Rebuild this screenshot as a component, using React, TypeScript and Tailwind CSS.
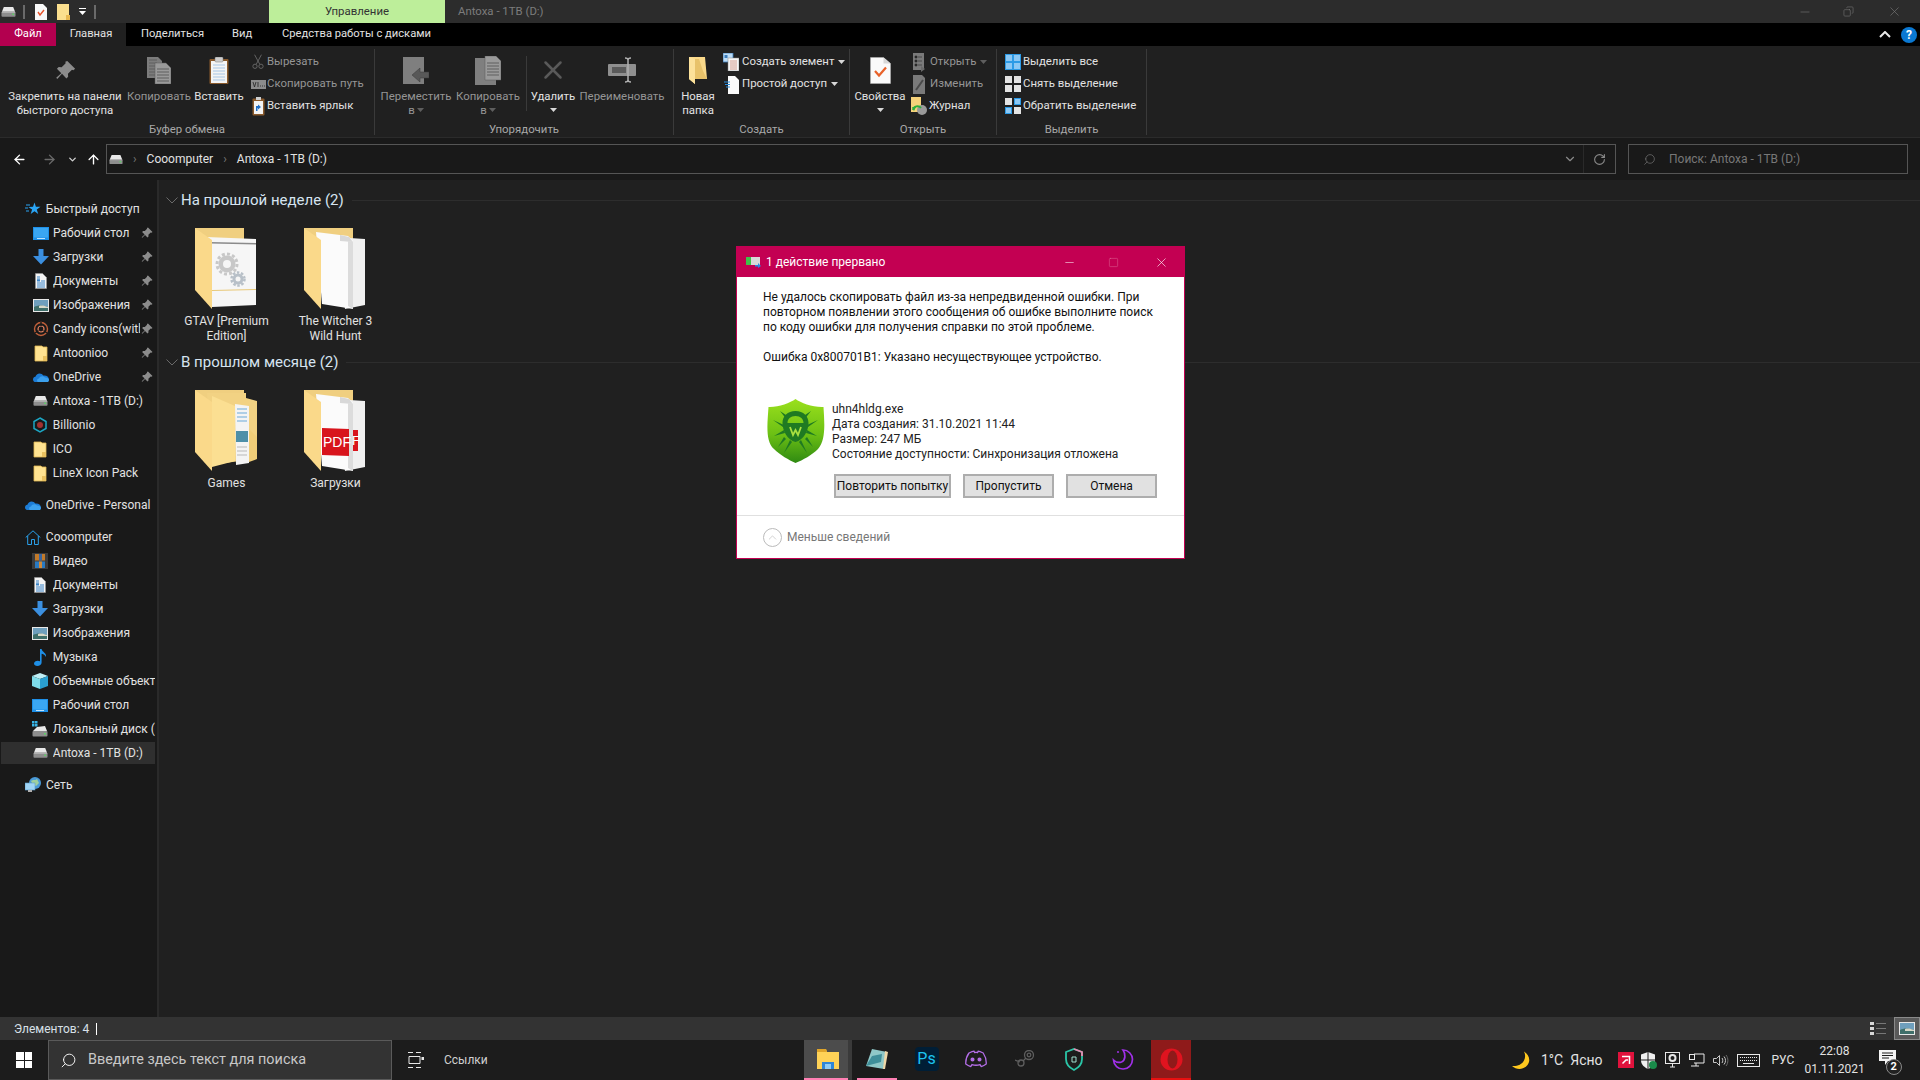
import React from 'react';
import { ChevronDown, ArrowLeft, ArrowRight, ArrowUp, RotateCw, Search, X, Minus, Square, Copy, ChevronUp } from 'lucide-react';

const Drive = ({ s = 18 }: { s?: number }) => (
  <svg width={s} height={s * 0.75} viewBox="0 0 16 12" className="shrink-0">
    <path d="M3 1h10l2 5H1z" fill="#e8e8e8" />
    <rect x="0.5" y="6" width="15" height="5.5" rx="1" fill="#8e8e8e" />
    <rect x="1" y="6" width="14" height="1" fill="#c8c8c8" />
    <rect x="12" y="8" width="2" height="1.6" fill="#5fd068" />
  </svg>
);

const FolderSm = () => (
  <svg width="14" height="17" viewBox="0 0 14 17" className="shrink-0">
    <path d="M1 1h7l1 1h4v14H1z" fill="#ffe391" stroke="#e0b650" strokeWidth="0.8" />
    <rect x="9" y="11" width="4" height="5" fill="#eac15f" />
  </svg>
);

const Pin = ({ c = '#8c8c8c', s = 12 }: { c?: string; s?: number }) => (
  <svg width={s} height={s} viewBox="0 0 12 12" className="shrink-0">
    <path d="M7 0.5l4.5 4.5-1 .8-.8-.3-2.3 2.3.1 1.7-1 1L4 7.9l-2.7 2.9-.6-.6L3.6 7.5 1.1 5l1-1 1.7.1 2.3-2.3-.2-.8z" fill={c} />
  </svg>
);

const Star = () => (
  <svg width="16" height="16" viewBox="0 0 16 16" className="shrink-0">
    <path d="M9.5 1.5l1.4 4.2 4.6.1-3.7 2.7 1.4 4.5-3.7-2.7-3.8 2.7 1.4-4.5L3.4 6l4.6-.2z" fill="#2aa4f4" />
    <path d="M1 4h4M0 7h3M1 10h3" stroke="#2aa4f4" strokeWidth="1" />
  </svg>
);

const Desktop = () => (
  <svg width="16" height="13" viewBox="0 0 16 13" className="shrink-0">
    <rect width="16" height="13" fill="#1e90e8" />
    <rect x="1" y="1" width="14" height="9.5" fill="#3aa6f2" />
    <rect x="4" y="11" width="8" height="1" fill="#bfe2fa" />
  </svg>
);

const Download = () => (
  <svg width="16" height="16" viewBox="0 0 16 16" className="shrink-0">
    <path d="M5.5 0h5v7H16l-8 8.5L0 7h5.5z" fill="#3b8fe0" />
  </svg>
);

const Docs = () => (
  <svg width="12" height="16" viewBox="0 0 12 16" className="shrink-0">
    <path d="M0.5 0.5h7l4 4v11h-11z" fill="#f4f4f4" stroke="#9a9a9a" strokeWidth="0.6" />
    <path d="M2 4h3M2 6h3M6 8h4M2 10h8M2 12h8M2 14h8" stroke="#3a84c8" strokeWidth="1" />
    <rect x="2" y="6.5" width="3" height="2" fill="#3a84c8" />
  </svg>
);

const Images = () => (
  <svg width="16" height="13" viewBox="0 0 16 13" className="shrink-0">
    <rect width="16" height="13" fill="#e8e8e8" />
    <rect x="1" y="1" width="14" height="11" fill="#6f9fbd" />
    <path d="M1 8c4-2 8-2 14 0v4H1z" fill="#3f6f6a" />
    <path d="M6 7c3-1 6 0 9 1v1H6z" fill="#d8d8c8" />
  </svg>
);

const Candy = () => (
  <svg width="16" height="16" viewBox="0 0 16 16" className="shrink-0" fill="none">
    <circle cx="8" cy="8" r="6.5" stroke="#c2603a" strokeWidth="1.4" />
    <circle cx="8" cy="8" r="3" stroke="#e08060" strokeWidth="1.2" />
    <path d="M8 1v4M2 12l3.5-2.5M14 12l-3.5-2.5" stroke="#1a1a1a" strokeWidth="1.4" />
  </svg>
);

const Cloud = ({ w = 16 }: { w?: number }) => (
  <svg width={w} height={w * 0.65} viewBox="0 0 16 10.4" className="shrink-0">
    <path d="M3.5 10.4C1.5 10.4 0 9 0 7.4 0 6 1 5 2.4 4.8 3 2.8 4.6 1.4 6.6 1.4c1.6 0 3 .9 3.7 2.2 2.8-.5 5.7 1.2 5.7 4 0 1.6-1.2 2.8-3 2.8z" fill="#1c7cd6" />
    <path d="M6 10.4c-1.2 0-2-.9-2-1.9 0-1.1.8-1.9 2-2 .6-1.3 1.9-2.2 3.3-2.2 1 0 2 .4 2.7 1.2 2-.2 4 .8 4 2.6 0 1.3-1 2.3-2.5 2.3z" fill="#3ca0ec" />
  </svg>
);

const Billionio = () => (
  <svg width="16" height="16" viewBox="0 0 16 16" className="shrink-0" fill="none">
    <path d="M8 1l6 3.5v7L8 15l-6-3.5v-7z" stroke="#1ca6c4" strokeWidth="1.5" />
    <circle cx="8" cy="8" r="3" fill="#a03030" />
  </svg>
);

const Home = () => (
  <svg width="16" height="15" viewBox="0 0 16 15" className="shrink-0" fill="none" stroke="#2aa0ea" strokeWidth="1">
    <path d="M0.7 7.5L8 0.8l7.3 6.7M2.7 6v8.500h3.800V9.500h3V14.500h3.800V6" />
  </svg>
);

const Video = () => (
  <svg width="16" height="16" viewBox="0 0 16 16" className="shrink-0">
    <rect width="16" height="16" fill="#3c3c3c" />
    <rect x="3" y="1" width="10" height="6.500" fill="#c27a2a" />
    <rect x="3" y="8.500" width="10" height="6.500" fill="#2a7ac2" />
    <rect x="7" y="1" width="3" height="6.500" fill="#3a66a0" />
    <rect x="7" y="8.500" width="3" height="6.500" fill="#d08a3a" />
  </svg>
);

const Music = () => (
  <svg width="13" height="17" viewBox="0 0 13 17" className="shrink-0">
    <path d="M6 0h1.600c.4 3 5.400 4 4.400 8-.8-2-2.800-3-4.400-3.200V13.500C7.600 15.500 5.600 17 3.400 17 1.400 17 0 16 0 14.600 0 13 1.800 11.800 3.800 11.800c.8 0 1.600.2 2.200.5z" fill="#1f8fe6" />
  </svg>
);

const Cube = () => (
  <svg width="16" height="16" viewBox="0 0 16 16" className="shrink-0">
    <path d="M8 0l8 3-8 3-8-3z" fill="#bfeef5" />
    <path d="M0 3l8 3v10l-8-3z" fill="#7fdcea" />
    <path d="M16 3L8 6v10l8-3z" fill="#2a9fd0" />
  </svg>
);

const LocalDisk = () => (
  <svg width="16" height="16" viewBox="0 0 16 16" className="shrink-0">
    <rect x="0" y="0" width="2.500" height="2.500" fill="#39b6e8" />
    <rect x="3" y="0" width="2.500" height="2.500" fill="#39b6e8" />
    <rect x="0" y="3" width="2.500" height="2.500" fill="#39b6e8" />
    <rect x="3" y="3" width="2.500" height="2.500" fill="#39b6e8" />
    <path d="M5 6l8-1 2 5H1z" fill="#e8e8e8" />
    <rect x="0.500" y="10" width="15" height="5.500" rx="1" fill="#8e8e8e" />
    <rect x="12" y="12" width="2" height="1.600" fill="#5fd068" />
  </svg>
);

const Network = () => (
  <svg width="17" height="16" viewBox="0 0 17 16" className="shrink-0">
    <circle cx="10" cy="6" r="6" fill="#4a9ad8" />
    <path d="M6 4c2-2 4 0 6-2l2 4-3 3-3-1z" fill="#9ed0a0" />
    <rect x="0" y="6" width="10" height="7" fill="#9fd4f5" stroke="#5a9cc8" strokeWidth="0.6" />
    <rect x="3" y="13" width="4" height="2" fill="#b0b0b0" />
  </svg>
);

type NavItem = { label: string; icon: React.ReactNode; pin?: boolean; top?: boolean; selected?: boolean; gap?: boolean };

const navItems: NavItem[] = [
  { label: 'Быстрый доступ', icon: <Star />, top: true },
  { label: 'Рабочий стол', icon: <Desktop />, pin: true },
  { label: 'Загрузки', icon: <Download />, pin: true },
  { label: 'Документы', icon: <Docs />, pin: true },
  { label: 'Изображения', icon: <Images />, pin: true },
  { label: 'Candy icons(with extras)', icon: <Candy />, pin: true },
  { label: 'Antoonioo', icon: <FolderSm />, pin: true },
  { label: 'OneDrive', icon: <Cloud />, pin: true },
  { label: 'Antoxa - 1TB (D:)', icon: <Drive s={15} /> },
  { label: 'Billionio', icon: <Billionio /> },
  { label: 'ICO', icon: <FolderSm /> },
  { label: 'LineX Icon Pack', icon: <FolderSm /> },
  { label: 'OneDrive - Personal', icon: <Cloud />, top: true, gap: true },
  { label: 'Cooomputer', icon: <Home />, top: true, gap: true },
  { label: 'Видео', icon: <Video /> },
  { label: 'Документы', icon: <Docs /> },
  { label: 'Загрузки', icon: <Download /> },
  { label: 'Изображения', icon: <Images /> },
  { label: 'Музыка', icon: <Music /> },
  { label: 'Объемные объекты', icon: <Cube /> },
  { label: 'Рабочий стол', icon: <Desktop /> },
  { label: 'Локальный диск (C:)', icon: <LocalDisk /> },
  { label: 'Antoxa - 1TB (D:)', icon: <Drive s={15} />, selected: true },
  { label: 'Сеть', icon: <Network />, top: true, gap: true },
];

const NavRow = ({ item }: { item: NavItem }) => (
  <div className={`flex h-[24px] items-center ${item.gap ? 'mt-[8px]' : ''}`}>
    <div className={`flex h-[22px] w-[154px] ml-[1px] items-center ${item.selected ? 'bg-[#2f2f2f]' : ''}`}>
      <div className={`flex w-[17px] justify-center ${item.top ? 'ml-[24px]' : 'ml-[31px]'}`}>{item.icon}</div>
      <span className={`ml-[4px] whitespace-nowrap overflow-hidden text-[#e2e2e2] ${item.pin ? 'w-[87px]' : item.top ? 'w-[110px]' : 'w-[103px]'}`}>{item.label}</span>
      {item.pin && (
        <div className="ml-[1px]">
          <Pin />
        </div>
      )}
    </div>
  </div>
);

/* big folder pictures */
const FolderBase = ({ children }: { children: React.ReactNode }) => (
  <svg width="63" height="83" viewBox="0 0 63 83" className="shrink-0">
    <path d="M0 1h49v12H0z" fill="#f0cf80" />
    {children}
  </svg>
);

const LeftFlap = () => <path d="M0 1l17 12v69L0 63z" fill="#fad98a" />;

const GearsFolder = () => (
  <FolderBase>
    <path d="M11 10l50 2v66l-44 2z" fill="#f6f6f6" />
    <path d="M15 15l46 1v1.500l-46-1z" fill="#8a8a8a" />
    <path d="M17 63l44-1v1l-44 1z" fill="#e8c878" />
    <circle cx="32" cy="37" r="8.500" fill="#c8c8c8" />
    <circle cx="32" cy="37" r="10" fill="none" stroke="#c8c8c8" strokeWidth="3" strokeDasharray="3 2.200" />
    <circle cx="32" cy="37" r="4" fill="#f6f6f6" />
    <circle cx="43" cy="52" r="5.500" fill="#b8c0c8" />
    <circle cx="43" cy="52" r="6.500" fill="none" stroke="#b8c0c8" strokeWidth="2.500" strokeDasharray="2.500 1.600" />
    <circle cx="43" cy="52" r="2.500" fill="#f6f6f6" />
    <LeftFlap />
  </FolderBase>
);

const PagesFolder = ({ pdf }: { pdf?: boolean }) => (
  <FolderBase>
    <path d="M30 10l31 2v66l-20 4z" fill="#f0f0f0" />
    <path d="M12 5l32 4 5 5v68L18 77z" fill="#fbfbfb" />
    <path d="M36 8l9 2 4 5-13-1z" fill="#d8d8d8" />
    <path d="M44 14l5 1v67l-5-3z" fill="#dcdcdc" />
    {pdf && (
      <>
        <path d="M49 41l5 0v21l-5 0z" fill="#d8141c" />
        <path d="M18 39l27 1v27l-27-1z" fill="#d8141c" />
        <text x="19" y="58" fontSize="14" fontFamily="Liberation Sans" fill="#ffffff">PDF</text>
        <text x="48" y="56" fontSize="13" fontFamily="Liberation Sans" fill="#ffffff">F</text>
      </>
    )}
    <LeftFlap />
  </FolderBase>
);

const GamesFolder = () => (
  <FolderBase>
    <path d="M12 4h39v5l11 3v38l-2 2v18l-45 6z" fill="#f2d283" />
    <path d="M40 15l14 2v57l-13 2z" fill="#f4f4f4" />
    <path d="M42 20h10M42 24h10M42 28h10M42 32h10" stroke="#6aa9d8" strokeWidth="1" />
    <rect x="41" y="42" width="12" height="11" fill="#4d8fa8" />
    <path d="M42 58h10M42 62h10M42 66h10" stroke="#b8b8b8" strokeWidth="1" />
    <path d="M17 7l23 10v55l-23 6z" fill="#fbdf92" />
    <path d="M54 40l8 8v22l-8 3z" fill="#f0cd78" />
    <LeftFlap />
  </FolderBase>
);

const Tile = ({ icon, label }: { icon: React.ReactNode; label: React.ReactNode }) => (
  <div className="flex w-[109px] flex-col items-center">
    <div className="flex h-[82px] items-start justify-center">{icon}</div>
    <div className="mt-[5px] text-center leading-[15px] text-[#e2e2e2]">{label}</div>
  </div>
);

const GroupHeader = ({ label }: { label: string }) => (
  <div className="flex h-[24px] items-center">
    <svg width="12" height="7" viewBox="0 0 12 7" fill="none" className="ml-[7px] shrink-0">
      <path d="M0.500 0.500L6 6l5.500-5.500" stroke="#6a6a6a" />
    </svg>
    <span className="ml-[3px] whitespace-nowrap text-[15px] text-[#d6e4f0]">{label}</span>
    <div className="ml-[8px] h-px flex-1 bg-[#2d2d2d]" />
  </div>
);

/* ribbon icons */
const PageIcon = () => (
  <svg width="24" height="27" viewBox="0 0 24 27">
    <path d="M0 0h11l4 4v17H0z" fill="#7c7c7c" />
    <path d="M2 3h8M2 6h8M2 9h6M2 12h6M2 15h6M2 18h6" stroke="#5f5f5f" strokeWidth="1" />
    <path d="M8 6h11l5 5v16H8z" fill="#9a9a9a" stroke="#5a5a5a" strokeWidth="0.5" />
    <path d="M10 12h12M10 15h12M10 18h12M10 21h12M10 24h12" stroke="#5f5f5f" strokeWidth="1" />
  </svg>
);

const PasteIcon = () => (
  <svg width="20" height="27" viewBox="0 0 20 27">
    <rect x="0.500" y="2" width="19" height="25" rx="1" fill="#8a5a2c" />
    <rect x="2" y="4" width="16" height="22" fill="#f4f4f4" />
    <path d="M4 8h12M4 11h12M4 14h12M4 17h12M4 20h12M4 23h12" stroke="#a8c6e6" strokeWidth="1" />
    <rect x="6" y="0" width="8" height="5" rx="1" fill="#cfcfcf" stroke="#777" strokeWidth="0.5" />
  </svg>
);

const MoveIcon = () => (
  <svg width="26" height="27" viewBox="0 0 26 27">
    <path d="M0 0h21v27H0z" fill="#7f7f7f" />
    <path d="M9 18l8-7v4h9v6h-9v4z" fill="#585858" stroke="#3a3a3a" strokeWidth="0.5" />
  </svg>
);

const CopyToIcon = () => (
  <svg width="26" height="29" viewBox="0 0 26 29">
    <path d="M0 2h21v27H0z" fill="#7f7f7f" />
    <path d="M10 0h11l5 5v19H10z" fill="#9a9a9a" stroke="#5a5a5a" strokeWidth="0.5" />
    <path d="M12 7h12M12 10h12M12 13h12M12 16h12M12 19h12" stroke="#5f5f5f" strokeWidth="1" />
  </svg>
);

const RenameIcon = () => (
  <svg width="28" height="26" viewBox="0 0 28 26">
    <rect x="0" y="7" width="28" height="12" rx="1" fill="#8f8f8f" />
    <rect x="4" y="10" width="14" height="6" fill="#5a5a5a" />
    <path d="M17 1c2 0 3 1 3 2 0-1 1-2 3-2M20 3v20M17 25c2 0 3-1 3-2 0 1 1 2 3 2" stroke="#b0b0b0" strokeWidth="1.500" fill="none" />
  </svg>
);

const NewFolderIcon = () => (
  <svg width="18" height="27" viewBox="0 0 18 27">
    <path d="M0 0h16l2 22H6v5L0 22z" fill="#fad98a" />
    <path d="M6 2h4l4 12 4 8H6z" fill="#e8c26a" />
    <path d="M0 0l6 2v25l-6-5z" fill="#fce19a" />
  </svg>
);

const PropsIcon = () => (
  <svg width="21" height="27" viewBox="0 0 21 27">
    <path d="M0.500 0.500h13l7 6v20h-20z" fill="#fafafa" stroke="#b8b8b8" strokeWidth="0.500" />
    <path d="M13.500 0.500v6h7z" fill="#d8d8d8" />
    <path d="M5 14l4 4.500 7-8" stroke="#e8622a" strokeWidth="2.200" fill="none" />
  </svg>
);

const Scissors = () => (
  <svg width="12" height="16" viewBox="0 0 14 17" fill="none" stroke="#6e6e6e" strokeWidth="1">
    <path d="M3 0l6 11M11 0L5 11" />
    <circle cx="3.500" cy="13.500" r="2.500" />
    <circle cx="10.500" cy="13.500" r="2.500" />
  </svg>
);

const PathIcon = () => (
  <svg width="15" height="9" viewBox="0 0 15 9">
    <rect width="15" height="9" fill="#8c8c8c" />
    <path d="M2 2l1.500 5L5 2M7 2v5M9 6h1M11 6h1M13 6h1" stroke="#222" strokeWidth="0.800" fill="none" />
  </svg>
);

const ShortcutIcon = () => (
  <svg width="13" height="19" viewBox="0 0 13 19">
    <rect x="0.500" y="1.500" width="12" height="17" rx="1" fill="#8a5a2c" />
    <rect x="2" y="4" width="9" height="13" fill="#f4f4f4" />
    <rect x="4" y="0" width="5" height="3" fill="#cfcfcf" />
    <path d="M4 14V9h2V7.500L9 10l-3 2.500V11H5.500v3z" fill="#1f6fc8" />
  </svg>
);

const NewItemIcon = () => (
  <svg width="16" height="18" viewBox="0 0 16 18">
    <rect x="0" y="0" width="10" height="9" fill="#bcdcf6" stroke="#3a7ab8" strokeWidth="0.800" />
    <rect x="1.500" y="2" width="3" height="3" fill="#3a7ab8" />
    <rect x="5" y="5" width="11" height="13" fill="#f6f6f6" stroke="#888" strokeWidth="0.500" />
    <path d="M7 8h7M7 10h7M7 12h7M7 14h7M7 16h7" stroke="#d08a7a" strokeWidth="0.800" />
  </svg>
);

const EasyIcon = () => (
  <svg width="15" height="19" viewBox="0 0 15 19">
    <path d="M4 1h7l4 4v14H4z" fill="#fafafa" />
    <path d="M0 7h6M1 9.500h5M2 12h4" stroke="#2a8ad8" strokeWidth="1.200" />
  </svg>
);

const OpenIcon = () => (
  <svg width="13" height="19" viewBox="0 0 13 19">
    <rect width="11" height="17" fill="#7a7a7a" />
    <path d="M2 3h2v2H2zM2 7h2v2H2zM2 11h2v2H2zM5 4h4M5 8h4M5 12h4" stroke="#404040" strokeWidth="0.800" />
    <path d="M8 13l4 3-4 3z" fill="#6a6a6a" />
  </svg>
);

const EditIcon = () => (
  <svg width="13" height="19" viewBox="0 0 13 19">
    <path d="M0 0h9l3 3v16H0z" fill="#7a7a7a" />
    <path d="M3 15l7-10" stroke="#4a4a4a" strokeWidth="2" />
  </svg>
);

const HistoryIcon = () => (
  <svg width="16" height="18" viewBox="0 0 16 18">
    <path d="M0 0h10v15H0z" fill="#f6d27a" />
    <circle cx="11" cy="13" r="5" fill="#9a9a9a" />
    <path d="M2 13a4.500 4.500 0 0 1 8-2" stroke="#2fae3c" strokeWidth="2" fill="none" />
    <path d="M1 10h4l-2 4z" fill="#2fae3c" />
  </svg>
);

const SelectIcon = ({ on }: { on: boolean[] }) => (
  <div className={`grid h-[16px] w-[16px] grid-cols-2 ${on.every(Boolean) ? 'gap-0' : 'gap-[2px]'}`}>
    {on.map((v, i) => (
      <div key={i} className={v ? 'border border-[#2d9be6] bg-[#8cc8f4]' : 'bg-[#e4e4e4]'} />
    ))}
  </div>
);

const Caret = ({ c = '#d8d8d8' }: { c?: string }) => (
  <svg width="7" height="4" viewBox="0 0 7 4" className="shrink-0">
    <path d="M0 0h7L3.500 4z" fill={c} />
  </svg>
);

const BigBtn = ({ w, ml = 0, icon, lines, dim, caret }: { w: number; ml?: number; icon: React.ReactNode; lines: React.ReactNode[]; dim?: boolean; caret?: boolean }) => (
  <div className="flex shrink-0 flex-col items-center" style={{ width: w, marginLeft: ml }}>
    <div className="flex h-[38px] items-center justify-center">{icon}</div>
    {lines.map((l, i) => (
      <div key={i} className={`flex h-[14px] items-center gap-[2px] whitespace-nowrap leading-[14px] ${dim ? 'text-[#959595]' : 'text-[#e2e2e2]'}`}>
        {l}
      </div>
    ))}
    {caret && (
      <div className="mt-[5px]">
        <Caret />
      </div>
    )}
  </div>
);

const SmallBtn = ({ icon, label, dim, caret, iw = 19, gap = 1 }: { icon: React.ReactNode; label: string; dim?: boolean; caret?: boolean; iw?: number; gap?: number }) => (
  <div className="flex h-[22px] items-center whitespace-nowrap">
    <div className="flex justify-center" style={{ width: iw, marginRight: gap }}>{icon}</div>
    <span className={dim ? 'text-[#959595]' : 'text-[#e2e2e2]'}>{label}</span>
    {caret && (
      <span className="ml-[4px]">
        <Caret c={dim ? '#5e5e5e' : '#d8d8d8'} />
      </span>
    )}
  </div>
);

const RibbonGroup = ({ w, label, children }: { w: number; label: string; children: React.ReactNode }) => (
  <div className="flex h-[86px] shrink-0 flex-col border-r border-[#3a3a3a]" style={{ width: w }}>
    <div className="flex h-[68px] shrink-0 pt-[2px]">{children}</div>
    <div className="mt-[5px] h-[14px] shrink-0 text-center leading-[14px] text-[#a8a8a8]">{label}</div>
  </div>
);

const Shield = () => (
  <svg width="60" height="64" viewBox="0 0 60 64">
    <defs>
      <linearGradient id="dw" x1="0" y1="0" x2="0" y2="1">
        <stop offset="0" stopColor="#9ae01c" />
        <stop offset="0.55" stopColor="#6cc014" />
        <stop offset="1" stopColor="#2f8a12" />
      </linearGradient>
    </defs>
    <path d="M29.500 0C24 4 12 8.500 2.500 8 1.500 24 -1 42 8 50c6 6 15 11 21.500 14C37 61 46 56 52 50c8-9 6.500-26 5.500-42C47 8.500 35 4 29.500 0z" fill="url(#dw)" />
    <g fill="#1f7a22">
      <path d="M29.500 12c-8 0-13 5-13 12 0 8 5 17 13 19 8-2 13-11 13-19 0-7-5-12-13-12zm0 5c5 0 8 3 8 7H21.500c0-4 3-7 8-7z" />
      <path d="M14 12l9 6-2 3zM45 12l-9 6 2 3zM7 21l11 5-1 2zM52 21l-11 5 1 2zM8 37l10-6 1 3zM51 37l-10-6-1 3zM18 54l6-13 2 2zM41 54l-6-13-2 2z" />
      <path d="M12 48l6-10 2 2zM47 48l-6-10-2 2z" />
    </g>
    <path d="M24 28l3 8 2.500-5 2.500 5 3-8" stroke="#a8e040" strokeWidth="1.800" fill="none" />
  </svg>
);

const DialogBtn = ({ w, children }: { w: number; children: string }) => (
  <div className="flex h-[24px] items-center justify-center whitespace-nowrap border-2 border-[#adadad] bg-[#e1e1e1] text-[#111]" style={{ width: w }}>
    {children}
  </div>
);

const Dialog = () => (
  <div className="absolute left-[736px] top-[246px] flex h-[313px] w-[449px] flex-col border border-[#c30052] bg-white text-[12px]">
    <div className="flex h-[30px] shrink-0 items-center bg-[#c30052] text-white">
      <svg width="15" height="12" viewBox="0 0 15 12" className="ml-[9px]">
        <rect x="0" y="1" width="14" height="8" fill="#d8d8d8" />
        <rect x="0" y="1" width="5" height="8" fill="#3fc24a" />
        <path d="M9 9h3V7l3 3-3 2v-1.500H9z" fill="#2a8ae0" />
      </svg>
      <span className="ml-[5px]">1 действие прервано</span>
      <Minus size={13} strokeWidth={1} className="ml-auto mr-[32px]" />
      <Square size={11} strokeWidth={1} className="mr-[35px] text-[#e0709c]" />
      <X size={15} strokeWidth={1} className="mr-[15px]" />
    </div>
    <div className="whitespace-nowrap px-[26px] pt-[13px] leading-[15px] text-[#111]">
      <p>Не удалось скопировать файл из-за непредвиденной ошибки. При</p>
      <p>повторном появлении этого сообщения об ошибке выполните поиск</p>
      <p>по коду ошибки для получения справки по этой проблеме.</p>
      <p className="mt-[15px]">Ошибка 0x800701B1: Указано несуществующее устройство.</p>
    </div>
    <div className="mt-[36px] flex pl-[29px]">
      <div className="-mt-[2px]">
        <Shield />
      </div>
      <div className="ml-[6px] mt-[1px] leading-[15px] text-[#222]">
        <p>uhn4hldg.exe</p>
        <p>Дата создания: 31.10.2021 11:44</p>
        <p>Размер: 247 МБ</p>
        <p>Состояние доступности: Синхронизация отложена</p>
      </div>
    </div>
    <div className="mt-[11px] flex gap-[12px] pl-[97px]">
      <DialogBtn w={117}>Повторить попытку</DialogBtn>
      <DialogBtn w={91}>Пропустить</DialogBtn>
      <DialogBtn w={91}>Отмена</DialogBtn>
    </div>
    <div className="mt-[17px] flex flex-1 items-center border-t border-[#e0e0e0] pl-[26px] text-[#777]">
      <div className="flex h-[19px] w-[19px] items-center justify-center rounded-full border border-[#bbbbbb]">
        <ChevronUp size={13} strokeWidth={1.2} className="text-[#bbbbbb]" />
      </div>
      <span className="ml-[5px]">Меньше сведений</span>
    </div>
  </div>
);

const TaskIcon = ({ w = 49, bg = '', bar = '', children }: { w?: number; bg?: string; bar?: string; children: React.ReactNode }) => (
  <div className={`flex h-[40px] flex-col items-center shrink-0 ${bg}`} style={{ width: w }}>
    <div className="flex h-[38px] items-center justify-center">{children}</div>
    <div className={`h-[2px] w-full ${bar}`} />
  </div>
);

export default function App() {
  return (
    <div className="relative flex h-[1080px] w-[1920px] flex-col overflow-hidden bg-[#202020] text-[12px] text-[#e2e2e2] [font-family:'Roboto','Liberation_Sans',sans-serif]">
      {/* Title bar */}
      <div className="flex h-[23px] shrink-0 items-center bg-[#2c2c2c]">
        <div className="ml-[1px]">
          <Drive s={15} />
        </div>
        <div className="ml-[7px] h-[14px] w-[2px] bg-[#6a6a6a]" />
        <svg width="12" height="16" viewBox="0 0 12 16" className="ml-[10px]">
          <path d="M0 0h8l4 4v12H0z" fill="#f8f8f8" />
          <path d="M3 8l2 3 4-5" stroke="#e8522a" strokeWidth="1.400" fill="none" />
        </svg>
        <svg width="13" height="16" viewBox="0 0 13 16" className="ml-[10px]">
          <path d="M0 0h12v16H0z" fill="#fbdf8e" />
          <path d="M9 11h4v5H9z" fill="#e8b850" />
        </svg>
        <div className="ml-[7px] flex w-[10px] flex-col items-center gap-[2px]">
          <div className="h-px w-[7px] bg-white" />
          <Caret c="#fff" />
        </div>
        <div className="ml-[7px] h-[14px] w-[2px] bg-[#6a6a6a]" />
        <div className="ml-[173px] flex h-full w-[176px] items-center justify-center bg-[#bdee9a] text-[11.4px] text-[#333]">Управление</div>
        <span className="ml-[13px] text-[11.4px] text-[#7c7c7c]">Antoxa - 1TB (D:)</span>
        <div className="ml-auto flex items-center text-[#7a7a7a]">
          <Minus size={14} strokeWidth={1} className="mr-[31px]" />
          <Copy size={11} strokeWidth={1.2} className="mr-[33px] -scale-x-100" />
          <X size={15} strokeWidth={1} className="mr-[18px]" />
        </div>
      </div>

      {/* Tabs */}
      <div className="flex h-[23px] shrink-0 items-center bg-black text-[11.2px]">
        <div className="flex h-full w-[56px] items-center justify-center bg-[#b3004f] text-white">Файл</div>
        <div className="flex h-full w-[70px] items-center justify-center bg-[#202020]">Главная</div>
        <span className="ml-[15px] w-[91px]">Поделиться</span>
        <span className="w-[50px]">Вид</span>
        <span>Средства работы с дисками</span>
        <svg width="12" height="7" viewBox="0 0 12 7" className="ml-auto" fill="none">
          <path d="M1 6l5-5 5 5" stroke="#e8e8e8" strokeWidth="2" />
        </svg>
        <div className="ml-[10px] mr-[3px] flex h-[16px] w-[16px] items-center justify-center rounded-full bg-[#0a78d2] text-[12px] font-bold leading-none text-white">?</div>
      </div>

      {/* Ribbon */}
      <div className="flex h-[92px] shrink-0 border-b border-[#2b2b2b] bg-[#202020] pt-[3px] text-[11.4px]">
        <RibbonGroup w={375} label="Буфер обмена">
          <BigBtn w={114} ml={8} icon={<Pin c="#8c8c8c" s={21} />} lines={['Закрепить на панели', 'быстрого доступа']} />
          <BigBtn w={66} ml={4} icon={<PageIcon />} lines={['Копировать']} dim />
          <BigBtn w={54} icon={<PasteIcon />} lines={['Вставить']} />
          <div className="ml-[4px] flex flex-col">
            <SmallBtn icon={<Scissors />} label="Вырезать" dim iw={16} gap={1} />
            <SmallBtn icon={<PathIcon />} label="Скопировать путь" dim iw={16} gap={1} />
            <SmallBtn icon={<ShortcutIcon />} label="Вставить ярлык" iw={16} gap={1} />
          </div>
        </RibbonGroup>
        <RibbonGroup w={299} label="Упорядочить">
          <BigBtn w={70} ml={6} icon={<MoveIcon />} lines={['Переместить', <><span>в</span><Caret c="#5e5e5e" /></>]} dim />
          <BigBtn w={70} ml={2} icon={<CopyToIcon />} lines={['Копировать', <><span>в</span><Caret c="#5e5e5e" /></>]} dim />
          <div className="ml-[3px] mt-[5px] h-[55px] w-px bg-[#3a3a3a]" />
          <BigBtn w={46} ml={3} icon={<X size={30} strokeWidth={2} className="text-[#5a5a5a]" />} lines={['Удалить']} caret />
          <BigBtn w={88} ml={2} icon={<RenameIcon />} lines={['Переименовать']} dim />
        </RibbonGroup>
        <RibbonGroup w={176} label="Создать">
          <BigBtn w={36} ml={6} icon={<NewFolderIcon />} lines={['Новая', 'папка']} />
          <div className="ml-[6px] flex flex-col">
            <SmallBtn icon={<NewItemIcon />} label="Создать элемент" caret iw={18} gap={2} />
            <SmallBtn icon={<EasyIcon />} label="Простой доступ" caret iw={18} gap={2} />
          </div>
        </RibbonGroup>
        <RibbonGroup w={147} label="Открыть">
          <BigBtn w={50} ml={5} icon={<PropsIcon />} lines={['Свойства']} caret />
          <div className="ml-[5px] flex flex-col">
            <SmallBtn icon={<OpenIcon />} label="Открыть" dim caret iw={18} gap={2} />
            <SmallBtn icon={<EditIcon />} label="Изменить" dim iw={18} gap={2} />
            <SmallBtn icon={<HistoryIcon />} label="Журнал" iw={18} gap={1} />
          </div>
        </RibbonGroup>
        <RibbonGroup w={150} label="Выделить">
          <div className="ml-[7px] flex flex-col">
            <SmallBtn icon={<SelectIcon on={[true, true, true, true]} />} label="Выделить все" iw={18} gap={1} />
            <SmallBtn icon={<SelectIcon on={[false, false, false, false]} />} label="Снять выделение" iw={18} gap={1} />
            <SmallBtn icon={<SelectIcon on={[false, true, true, false]} />} label="Обратить выделение" iw={18} gap={1} />
          </div>
        </RibbonGroup>
      </div>

      {/* Address row */}
      <div className="flex h-[42px] shrink-0 items-center bg-[#191919]">
        <ArrowLeft size={15} strokeWidth={2.2} className="ml-[12px] text-white" />
        <ArrowRight size={15} strokeWidth={2.2} className="ml-[15px] text-[#6a6a6a]" />
        <ChevronDown size={11} strokeWidth={3} className="ml-[10px] text-[#d0d0d0]" />
        <ArrowUp size={15} strokeWidth={2.2} className="ml-[8px] text-white" />
        <div className="ml-[5px] flex h-[30px] w-[1510px] items-center border border-[#555] bg-[#191919]">
          <div className="ml-[2px]">
            <Drive s={14} />
          </div>
          <span className="ml-[10px] text-[#777]">›</span>
          <span className="ml-[10px]">Cooomputer</span>
          <span className="ml-[10px] text-[#777]">›</span>
          <span className="ml-[10px]">Antoxa - 1TB (D:)</span>
          <ChevronDown size={14} strokeWidth={2} className="ml-auto text-[#8a8a8a]" />
          <div className="ml-[6px] h-full w-px bg-[#2a2a2a]" />
          <RotateCw size={13} strokeWidth={2} className="mx-[9px] text-[#8a8a8a]" />
        </div>
        <div className="ml-[12px] flex h-[30px] w-[280px] items-center border border-[#555]">
          <Search size={13} strokeWidth={1.2} className="ml-[14px] -scale-x-100 text-[#7a7a7a]" />
          <span className="ml-[13px] text-[#777]">Поиск: Antoxa - 1TB (D:)</span>
        </div>
      </div>

      {/* Main */}
      <div className="flex min-h-0 flex-1">
        <div className="w-[159px] shrink-0 overflow-hidden border-r-2 border-[#2a2a2a] bg-[#191919] pt-[17px]">
          {navItems.map((item, i) => (
            <NavRow key={i} item={item} />
          ))}
        </div>
        <div className="flex-1 pt-[8px]">
          <GroupHeader label="На прошлой неделе (2)" />
          <div className="mt-[15px] flex h-[123px] pl-[13px]">
            <Tile icon={<GearsFolder />} label={<>GTAV [Premium<br />Edition]</>} />
            <Tile icon={<PagesFolder />} label={<>The Witcher 3<br />Wild Hunt</>} />
          </div>
          <GroupHeader label="В прошлом месяце (2)" />
          <div className="mt-[15px] flex pl-[13px]">
            <Tile icon={<GamesFolder />} label="Games" />
            <Tile icon={<PagesFolder pdf />} label="Загрузки" />
          </div>
        </div>
      </div>

      {/* Status bar */}
      <div className="flex h-[23px] shrink-0 items-center bg-[#333333]">
        <span className="ml-[14px] text-[#d8e0e8]">Элементов: 4</span>
        <div className="ml-[7px] h-[12px] w-px bg-white" />
        <div className="ml-auto grid grid-cols-[4px_10px] gap-x-[2px] gap-y-[2px]">
          {[0, 1, 2].map((i) => (
            <React.Fragment key={i}>
              <div className="h-[3px] w-[4px] bg-[#d8d8d8]" />
              <div className="h-px self-center bg-[#777]" />
            </React.Fragment>
          ))}
        </div>
        <div className="ml-[8px] flex h-full w-[26px] items-center justify-center border border-[#8a8a8a] bg-[#5a5a5a]">
          <Images />
        </div>
      </div>

      {/* Taskbar */}
      <div className="flex h-[40px] shrink-0 items-center bg-[#1c1c1c]">
        <div className="ml-[16px] grid h-[16px] w-[16px] grid-cols-2 gap-[1px]">
          <div className="bg-white" />
          <div className="bg-white" />
          <div className="bg-white" />
          <div className="bg-white" />
        </div>
        <div className="ml-[16px] flex h-full w-[344px] items-center border border-[#5a5a5a] bg-[#333333]">
          <Search size={17} strokeWidth={1.3} className="ml-[11px] -scale-x-100 text-white" />
          <span className="ml-[11px] text-[14.4px] text-[#c8c8c8]">Введите здесь текст для поиска</span>
        </div>
        <svg width="16" height="16" viewBox="0 0 16 16" fill="none" stroke="#e8e8e8" className="ml-[16px]">
          <path d="M0 0.500h5M8 0.500h5M1 4.500h11v7H1zM0 15.500h5M8 15.500h5" />
          <rect x="13.500" y="5" width="2.500" height="3" fill="#e8e8e8" stroke="none" />
        </svg>
        <span className="ml-[20px] w-[360px] text-[#d0d0d0]">Ссылки</span>

        <TaskIcon w={44} bg="bg-[#4c4c4c]" bar="bg-[#ff80b4]">
          <svg width="22" height="20" viewBox="0 0 22 20" className="ml-[4px]">
            <path d="M0 0h9l1 3h12v17H0z" fill="#ffd257" />
            <path d="M0 0h9l1 3H0z" fill="#e0a52a" />
            <path d="M5 13h12v7H5z" fill="#2f86d8" />
            <path d="M8 15h6v5H8z" fill="#8ecbf5" />
          </svg>
        </TaskIcon>
        <div className="h-[40px] w-[4px] shrink-0 bg-[#3a3a3a]" />
        <div className="ml-[5px] w-[40px] shrink-0">
          <TaskIcon w={40} bar="bg-[#ff80b4]">
            <svg width="24" height="22" viewBox="0 0 24 22">
              <path d="M7 1l15 3-3 17L1 18z" fill="#8fc8c8" />
              <path d="M1 18L7 8l10-2-1 8z" fill="#3f8f9a" />
              <path d="M20 3l3 1-3 17-2 0z" fill="#f0d8a8" />
            </svg>
          </TaskIcon>
        </div>
        <div className="ml-[5px] flex">
          <TaskIcon w={49}>
            <div className="flex h-[24px] w-[24px] items-center justify-center rounded-[4px] bg-[#001e36] text-[16px] leading-none text-[#1cc4f0]">Ps</div>
          </TaskIcon>
          <TaskIcon w={49}>
            <svg width="22" height="18" viewBox="0 0 22 18" fill="none" stroke="#b46ee8" strokeWidth="1.300">
              <path d="M4 3c2-1 4-1.800 5-1.800l.6 1.300c1-.2 2-.2 3 0l.6-1.300c1 0 3 .8 5 1.800 2 3 3.300 7 3 11-1.500 1.200-3 2-5 2.600l-1.200-2c-3 1-5 1-8 0l-1.200 2c-2-.6-3.500-1.400-5-2.600-.3-4 1-8 3.200-11z" />
              <circle cx="7.500" cy="9.500" r="1.400" fill="#b46ee8" />
              <circle cx="14.500" cy="9.500" r="1.400" fill="#b46ee8" />
            </svg>
          </TaskIcon>
          <TaskIcon w={49}>
            <svg width="20" height="18" viewBox="0 0 20 18" fill="none" stroke="#5e5e5e" strokeWidth="1.300">
              <circle cx="14" cy="5" r="4.500" />
              <circle cx="14" cy="5" r="1.800" />
              <circle cx="6" cy="13" r="3" />
              <path d="M0 10l5 2M8 11l3-3" />
            </svg>
          </TaskIcon>
          <TaskIcon w={49}>
            <svg width="18" height="23" viewBox="0 0 18 23" fill="none" strokeWidth="1.800">
              <path d="M9 1l8 3v7c0 5-4 9-8 11-4-2-8-6-8-11V4z" stroke="#2bc6a8" />
              <path d="M9 1l8 3v4" stroke="#e88ab0" />
              <path d="M7 9h4v5H7z" stroke="#9fe0d0" strokeWidth="1" />
            </svg>
          </TaskIcon>
          <TaskIcon w={49}>
            <svg width="22" height="22" viewBox="0 0 22 22" fill="none">
              <path d="M11 2a9.500 9.500 0 1 1-9.500 10c2 2 5 3 8 2 4-1.500 4.500-8 1.500-12z" stroke="#a030e8" strokeWidth="1.700" />
              <path d="M5 4h2M6 3v2" stroke="#a030e8" />
            </svg>
          </TaskIcon>
        </div>
        <div className="ml-[4px]">
          <TaskIcon w={40} bg="bg-[#8f1a1a]" bar="bg-[#e81010]">
            <svg width="23" height="23" viewBox="0 0 23 23">
              <circle cx="11.500" cy="11.500" r="11" fill="#e0131f" />
              <ellipse cx="12.500" cy="11.500" rx="5" ry="9" fill="#8f1a1a" />
            </svg>
          </TaskIcon>
        </div>

        {/* Tray */}
        <svg width="19" height="19" viewBox="0 0 19 19" className="ml-[320px]">
          <path d="M13 0.500c5 3 7 9 3.500 13.500-4 5-11 5-15.500 1 5 .5 10-1.500 12-5.500 1.500-3 1.500-6 0-9z" fill="#ffc81e" />
        </svg>
        <span className="ml-[11px] text-[14px]">1°C</span>
        <span className="ml-[7px] text-[14px]">Ясно</span>
        <div className="ml-[15px] flex h-[16px] w-[16px] items-center justify-center bg-[#e0123c]">
          <svg width="10" height="10" viewBox="0 0 10 10" fill="none" stroke="#fff" strokeWidth="1.500">
            <path d="M1 1.500h7.500V9M1.500 8.500l3.500-3.500h2" />
          </svg>
        </div>
        <svg width="16" height="17" viewBox="0 0 16 17" className="ml-[7px]">
          <path d="M7 0l7 2.500v6C14 13 10 15.500 7 17 4 15.500 0 13 0 8.500v-6z" fill="#f0f0f0" />
          <path d="M7 0v17M0 8h14" stroke="#1c1c1c" strokeWidth="1" />
          <circle cx="12" cy="13" r="4" fill="#1a8a4a" />
        </svg>
        <svg width="15" height="16" viewBox="0 0 15 16" fill="none" stroke="#e8e8e8" strokeWidth="1" className="ml-[8px]">
          <rect x="0.500" y="0.500" width="14" height="11" />
          <circle cx="7.500" cy="6" r="3" strokeWidth="2" />
          <path d="M5 15h5M7.500 12v3" />
        </svg>
        <svg width="16" height="14" viewBox="0 0 16 14" fill="none" stroke="#e8e8e8" strokeWidth="1" className="ml-[9px]">
          <path d="M5 1h10v9H5M2 13h8M7 10v3" />
          <rect x="0.500" y="1.500" width="5" height="5" />
        </svg>
        <svg width="16" height="13" viewBox="0 0 16 13" fill="none" stroke="#c8c8c8" strokeWidth="1" className="ml-[8px]">
          <path d="M0.500 4.500h3l3-3v10l-3-3h-3z" />
          <path d="M9 4c1 1 1 4 0 5M11 2.500c2 2 2 6 0 8" />
          <path d="M13 1c2.500 3 2.500 8 0 11" stroke="#6a6a6a" />
        </svg>
        <svg width="23" height="13" viewBox="0 0 23 13" fill="none" stroke="#e8e8e8" strokeWidth="1" className="ml-[8px]">
          <rect x="0.500" y="0.500" width="22" height="12" />
          <path d="M3 3.500h17M3 6.500h17" strokeDasharray="1 1" />
          <path d="M6 9.500h11" />
        </svg>
        <span className="ml-[12px] w-[22px]">РУС</span>
        <div className="ml-[14px] flex w-[54px] flex-col items-center leading-[18px]">
          <span>22:08</span>
          <span>01.11.2021</span>
        </div>
        <div className="relative ml-[17px] mt-[-6px]">
          <svg width="17" height="15" viewBox="0 0 17 15">
            <path d="M0 0h17v11H9l-3 4v-4H0z" fill="#f4f4f4" />
            <path d="M3 3h11M3 5.500h11M3 8h7" stroke="#1c1c1c" />
          </svg>
          <div className="absolute left-[7px] top-[9px] flex h-[16px] w-[16px] items-center justify-center rounded-full border border-[#8a8a8a] bg-[#222] text-[11px] font-bold leading-none text-white">2</div>
        </div>
      </div>

      <Dialog />
    </div>
  );
}
